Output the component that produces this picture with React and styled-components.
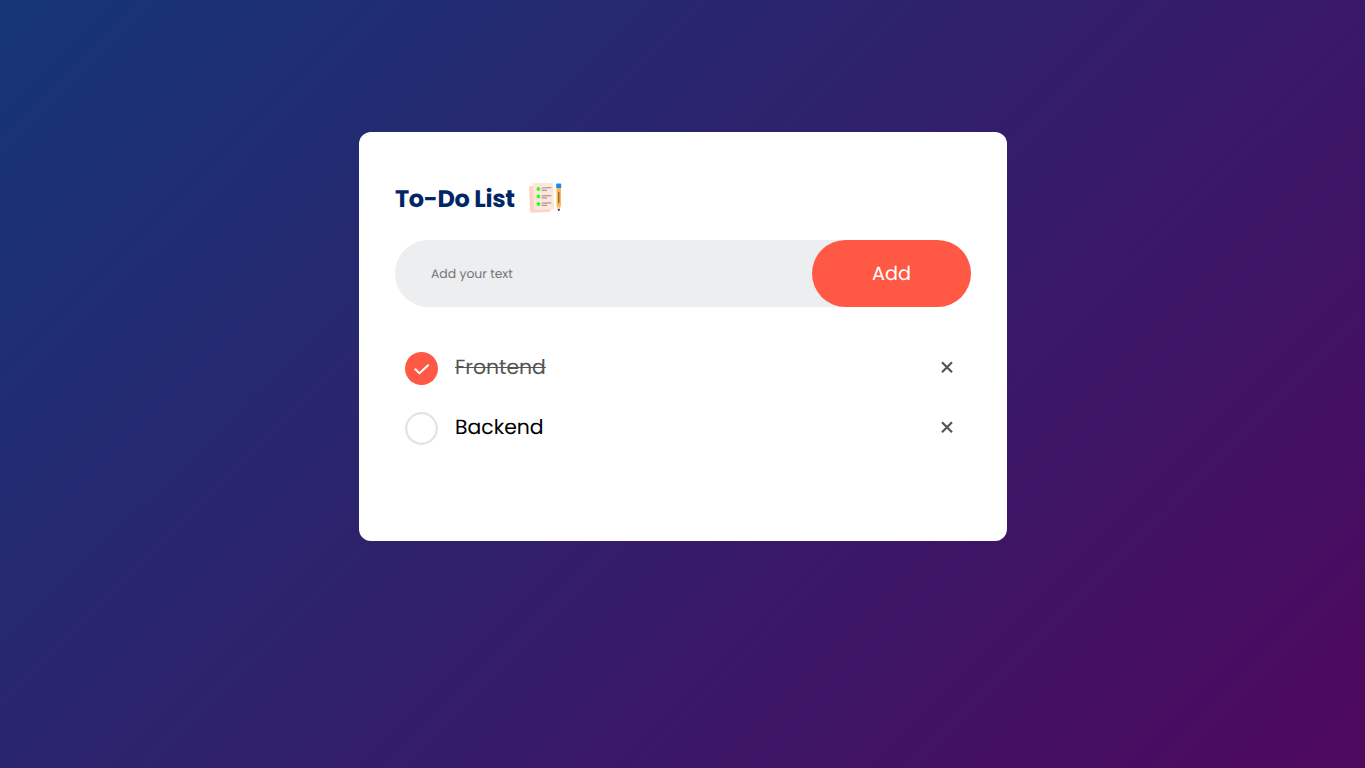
import React, { useState } from "react";
import styled, { createGlobalStyle } from "styled-components";

const GlobalStyle = createGlobalStyle`
  * { margin: 0; padding: 0; box-sizing: border-box; }
  body, input, button {
    font-family: Poppins, Inter, "Liberation Sans", sans-serif;
    text-rendering: geometricPrecision;
  }
`;

const Page = styled.main`
  min-height: 100vh;
  padding-top: 132px;
  background: linear-gradient(135deg, #153677, #4e085f);
`;

const Card = styled.section`
  width: 648px;
  height: 409px;
  margin: 0 auto 0 359px;
  padding: 48px 36px 0;
  background: #fff;
  border-radius: 12px;
`;

const Header = styled.header`
  display: flex;
  align-items: center;
  height: 36px;
  margin-bottom: 24px;
`;

const Title = styled.h2`
  width: 133px;
  color: #002765;
  font-size: 24px;
  font-weight: 700;
  letter-spacing: -0.32px;
  line-height: 36px;
  white-space: nowrap;
  padding-top: 3px;
`;

const Row = styled.form`
  display: flex;
  height: 67px;
  background: #edeef0;
  border-radius: 34px;
  margin-bottom: 30px;
`;

const TextInput = styled.input`
  flex: 1;
  min-width: 0;
  border: 0;
  outline: 0;
  background: transparent;
  padding: 2px 0 0 36px;
  font-size: 12.4px;
  color: #333;
  &::placeholder { color: #757575; opacity: 1; }
`;

const AddButton = styled.button`
  width: 159px;
  padding-bottom: 1px;
  border: 0;
  border-radius: 40px;
  background: #ff5945;
  color: #fff;
  font-size: 19.2px;
  cursor: pointer;
`;

const List = styled.ul`
  list-style: none;
`;

const Item = styled.li`
  display: flex;
  align-items: center;
  height: 60px;
  padding: 0 4px 0 10px;
`;

const Toggle = styled.button`
  width: 33px;
  height: 33px;
  margin: 3px 17px 0 0;
  border: 0;
  background: none;
  cursor: pointer;
  svg { display: block; }
`;

const Label = styled.span`
  flex: 1;
  padding-top: 2px;
  font-size: 20.4px;
  line-height: 30px;
  color: ${(p) => (p.$done ? "#555" : "#000")};
  text-decoration: ${(p) => (p.$done ? "line-through" : "none")};
  text-decoration-thickness: 1px;
`;

const Remove = styled.button`
  display: flex;
  align-items: center;
  justify-content: center;
  width: 40px;
  height: 40px;
  border: 0;
  border-radius: 50%;
  background: none;
  cursor: pointer;
`;

function ListIcon() {
  return (
    <svg width="34" height="34" viewBox="0 0 34 34" aria-hidden="true">
      <path d="M1 5.2 20 3.6 22.7 29.4Q22.8 30.5 21 30.7L4 31.7Q2.3 31.8 2.1 30Z" fill="#ffd2c5" />
      <path d="M6 2 24 1.8Q25 1.8 25 3L26.2 27.3Q26.2 28.5 25 28.6L7.7 29.1Q6.2 29.1 6.1 27.5L5 3Q5 2 6 2Z" fill="#fde7d9" />
      <g fill="#2dff29">
        <circle cx="10.4" cy="8" r="1.9" />
        <circle cx="10.4" cy="15.5" r="1.9" />
        <circle cx="10.4" cy="23" r="1.9" />
      </g>
      <g fill="none" strokeWidth="1.2" stroke="#ac94a5">
        <path d="M13.7 7 23.3 6.7M13.7 9.4H19M13.7 14.9 23.3 14.6M13.7 16.8H19M13.7 22.1 23.3 21.8M13.7 24.4H19" />
      </g>
      <path d="M28.6 5.5H32.9V24.5L31.6 28H29.9L28.6 24.5Z" fill="#ffb344" />
      <path d="M28.2 3.4Q28.2 2.4 29.2 2.4H32.3Q33.2 2.4 33.2 3.4V7H28.2Z" fill="#168cf4" />
      <path d="M30.8 11V22" stroke="#765a3c" strokeWidth="1.1" />
      <path d="M28.8 25.5H32.8L31.3 29.8H30.1Z" fill="#f6c7bd" />
      <path d="M29.6 28H32L31.2 30H30.3Z" fill="#443749" />
    </svg>
  );
}

function CircleIcon({ done }) {
  return (
    <svg width="33" height="33" viewBox="0 0 33 33" aria-hidden="true">
      {done ? (
        <>
          <circle cx="16.5" cy="16.5" r="16.5" fill="#ff5945" />
          <path d="m10.4 17.3 4 4 8.7-8.1" fill="none" stroke="#fff" strokeWidth="2" strokeLinecap="round" strokeLinejoin="round" />
        </>
      ) : (
        <circle cx="16.5" cy="16.5" r="15.3" fill="#fff" stroke="#e3e3e3" strokeWidth="2.2" />
      )}
    </svg>
  );
}

export default function App() {
  const [tasks, setTasks] = useState([
    { id: 1, text: "Frontend", done: true },
    { id: 2, text: "Backend", done: false },
  ]);
  const [draft, setDraft] = useState("");

  const add = (e) => {
    e.preventDefault();
    if (!draft.trim()) return;
    setTasks([...tasks, { id: Date.now(), text: draft, done: false }]);
    setDraft("");
  };
  const toggle = (id) => setTasks(tasks.map((t) => (t.id === id ? { ...t, done: !t.done } : t)));
  const remove = (id) => setTasks(tasks.filter((t) => t.id !== id));

  return (
    <>
      <GlobalStyle />
      <Page>
        <Card>
          <Header>
            <Title>To-Do List</Title>
            <ListIcon />
          </Header>
          <Row onSubmit={add}>
            <TextInput value={draft} onChange={(e) => setDraft(e.target.value)} placeholder="Add your text" />
            <AddButton type="submit">Add</AddButton>
          </Row>
          <List>
            {tasks.map((t) => (
              <Item key={t.id}>
                <Toggle onClick={() => toggle(t.id)} aria-label="Toggle task">
                  <CircleIcon done={t.done} />
                </Toggle>
                <Label $done={t.done}>{t.text}</Label>
                <Remove onClick={() => remove(t.id)} aria-label="Remove task">
                  <svg width="12" height="12" viewBox="0 0 12 12">
                    <path d="m1 1.2 10 10M11 1.2 1 11.2" stroke="#555" strokeWidth="2.2" />
                  </svg>
                </Remove>
              </Item>
            ))}
          </List>
        </Card>
      </Page>
    </>
  );
}
